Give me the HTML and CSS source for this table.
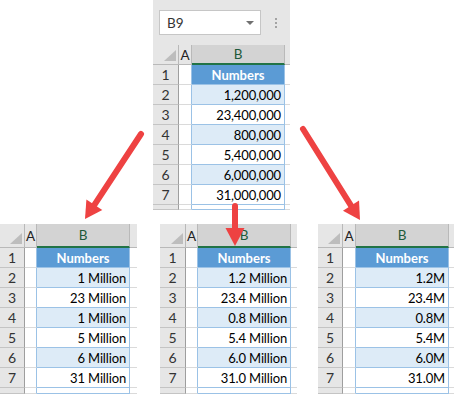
FILE: index.html
```html
<!DOCTYPE html>
<html>
<head>
<meta charset="utf-8">
<link rel="stylesheet" href="styles.css">
</head>
<body>
<div class="page">
  <div class="top-row">
    <div class="sheet sheet-top">
      <div class="formula">
        <div class="namebox"><span>B9</span><span class="caret"></span></div>
        <div class="dots"><i></i><i></i><i></i></div>
      </div>
      <div class="grid grid-top">
        <div class="corner"></div><div class="ch">A</div><div class="ch sel">B</div><div class="ch c"></div>
        <div class="rh">1</div><div class="ca"></div><div class="cb hdr">Numbers</div><div class="cc"></div>
        <div class="rh">2</div><div class="ca"></div><div class="cb alt">1,200,000</div><div class="cc"></div>
        <div class="rh">3</div><div class="ca"></div><div class="cb">23,400,000</div><div class="cc"></div>
        <div class="rh">4</div><div class="ca"></div><div class="cb alt">800,000</div><div class="cc"></div>
        <div class="rh">5</div><div class="ca"></div><div class="cb">5,400,000</div><div class="cc"></div>
        <div class="rh">6</div><div class="ca"></div><div class="cb alt">6,000,000</div><div class="cc"></div>
        <div class="rh">7</div><div class="ca"></div><div class="cb">31,000,000</div><div class="cc"></div>
        <div class="rh"></div><div class="ca"></div><div class="cb"></div><div class="cc"></div>
      </div>
    </div>
  </div>
  <div class="bottom-row">
    <div class="sheet sheet-b1">
      <div class="grid grid-b1">
        <div class="corner"></div><div class="ch">A</div><div class="ch sel">B</div><div class="ch c"></div>
        <div class="rh">1</div><div class="ca"></div><div class="cb hdr">Numbers</div><div class="cc"></div>
        <div class="rh">2</div><div class="ca"></div><div class="cb alt">1 Million</div><div class="cc"></div>
        <div class="rh">3</div><div class="ca"></div><div class="cb">23 Million</div><div class="cc"></div>
        <div class="rh">4</div><div class="ca"></div><div class="cb alt">1 Million</div><div class="cc"></div>
        <div class="rh">5</div><div class="ca"></div><div class="cb">5 Million</div><div class="cc"></div>
        <div class="rh">6</div><div class="ca"></div><div class="cb alt">6 Million</div><div class="cc"></div>
        <div class="rh">7</div><div class="ca"></div><div class="cb">31 Million</div><div class="cc"></div>
        <div class="rh"></div><div class="ca"></div><div class="cb"></div><div class="cc"></div>
      </div>
    </div>
    <div class="sheet sheet-b2">
      <div class="grid grid-b2">
        <div class="corner"></div><div class="ch">A</div><div class="ch sel">B</div><div class="ch c"></div>
        <div class="rh">1</div><div class="ca"></div><div class="cb hdr">Numbers</div><div class="cc"></div>
        <div class="rh">2</div><div class="ca"></div><div class="cb alt">1.2 Million</div><div class="cc"></div>
        <div class="rh">3</div><div class="ca"></div><div class="cb">23.4 Million</div><div class="cc"></div>
        <div class="rh">4</div><div class="ca"></div><div class="cb alt">0.8 Million</div><div class="cc"></div>
        <div class="rh">5</div><div class="ca"></div><div class="cb">5.4 Million</div><div class="cc"></div>
        <div class="rh">6</div><div class="ca"></div><div class="cb alt">6.0 Million</div><div class="cc"></div>
        <div class="rh">7</div><div class="ca"></div><div class="cb">31.0 Million</div><div class="cc"></div>
        <div class="rh"></div><div class="ca"></div><div class="cb"></div><div class="cc"></div>
      </div>
    </div>
    <div class="sheet sheet-b3">
      <div class="grid grid-b3">
        <div class="corner"></div><div class="ch">A</div><div class="ch sel">B</div><div class="ch c"></div>
        <div class="rh">1</div><div class="ca"></div><div class="cb hdr">Numbers</div><div class="cc"></div>
        <div class="rh">2</div><div class="ca"></div><div class="cb alt">1.2M</div><div class="cc"></div>
        <div class="rh">3</div><div class="ca"></div><div class="cb">23.4M</div><div class="cc"></div>
        <div class="rh">4</div><div class="ca"></div><div class="cb alt">0.8M</div><div class="cc"></div>
        <div class="rh">5</div><div class="ca"></div><div class="cb">5.4M</div><div class="cc"></div>
        <div class="rh">6</div><div class="ca"></div><div class="cb alt">6.0M</div><div class="cc"></div>
        <div class="rh">7</div><div class="ca"></div><div class="cb">31.0M</div><div class="cc"></div>
        <div class="rh"></div><div class="ca"></div><div class="cb"></div><div class="cc"></div>
      </div>
    </div>
  </div>
  <svg class="arrows" width="454" height="394" viewBox="0 0 454 394">
    <g fill="#ee4242" stroke="#ee4242">
      <line x1="141" y1="134" x2="94.4" y2="204.8" stroke-width="6" stroke-linecap="round"/>
      <polygon points="85,219 102.3,210 86.4,199.6" stroke="none"/>
      <line x1="235" y1="206" x2="235" y2="229" stroke-width="6" stroke-linecap="round"/>
      <polygon points="235,246 225.5,228 244.5,228" stroke="none"/>
      <line x1="303" y1="129" x2="351" y2="205.6" stroke-width="6" stroke-linecap="round"/>
      <polygon points="360,220 359.05,200.56 342.95,210.64" stroke="none"/>
    </g>
  </svg>
</div>
</body>
</html>
```
FILE: styles.css
```css
body {
  margin: 0;
  font-family: Lato, "Liberation Sans", sans-serif;
}
.page {
  position: relative;
  width: 454px;
  height: 394px;
  overflow: hidden;
  background: #fff;
}
.top-row {
  display: flex;
  padding-left: 153px;
}
.bottom-row {
  display: flex;
  margin-top: 14px;
}
.sheet {
  background: #e6e6e6;
}
.sheet-top { width: 137px; }
.sheet-b1 { width: 137px; }
.sheet-b2 { width: 137px; margin-left: 23px; }
.sheet-b3 { width: 136px; margin-left: 21px; }

.formula {
  height: 45px;
  box-sizing: border-box;
  padding: 10px 0 0 6px;
  display: flex;
  align-items: flex-start;
}
.namebox {
  width: 102px;
  height: 25px;
  box-sizing: border-box;
  border: 1px solid #c6c6c6;
  background: #fff;
  display: flex;
  align-items: center;
  justify-content: space-between;
  padding: 0 6px 0 7px;
  font-size: 13.5px;
  color: #333;
}
.caret {
  width: 0;
  height: 0;
  border-left: 4px solid transparent;
  border-right: 4px solid transparent;
  border-top: 4px solid #707070;
}
.dots {
  margin: 8px 0 0 14px;
  display: flex;
  flex-direction: column;
  gap: 2px;
}
.dots i {
  display: block;
  width: 2px;
  height: 2px;
  background: #a3a3a3;
}

.grid {
  display: grid;
}
.grid > div {
  box-sizing: border-box;
  overflow: hidden;
  white-space: nowrap;
}
.grid-top {
  grid-template-columns: 26px 13px 93px 1fr;
  grid-template-rows: 20px repeat(7, 20px) 5px;
}
.grid-b1 {
  grid-template-columns: 25px 12px 93px 1fr;
  grid-template-rows: 24px repeat(7, 20px) 6px;
}
.grid-b2 {
  grid-template-columns: 26px 12px 93px 1fr;
  grid-template-rows: 24px repeat(7, 20px) 6px;
}
.grid-b3 {
  grid-template-columns: 25px 13px 93px 1fr;
  grid-template-rows: 24px repeat(7, 20px) 6px;
}

.corner {
  position: relative;
  background: #e6e6e6;
  border-right: 1px solid #b9b9b9;
  border-bottom: 1px solid #b9b9b9;
}
.corner::after {
  content: "";
  position: absolute;
  right: 2px;
  bottom: 3px;
  width: 12px;
  height: 11px;
  background: #bdbdbd;
  clip-path: polygon(100% 0, 100% 100%, 0 100%);
}
.ch {
  background: #e6e6e6;
  border-right: 1px solid #b9b9b9;
  border-bottom: 1px solid #b9b9b9;
  display: flex;
  align-items: center;
  justify-content: center;
  font-size: 13.5px;
  color: #222;
}
.ch.sel {
  background: #d3d3d3;
  border-bottom: 2px solid #217346;
  color: #1d5a3a;
}
.ch.c {
  border-right: none;
}
.rh {
  background: #e6e6e6;
  border-right: 1px solid #9e9e9e;
  border-bottom: 1px solid #c4c4c4;
  text-align: center;
  font-size: 14px;
  line-height: 20px;
  color: #333;
}
.ca {
  background: #fff;
  border-right: 1px solid #9bc2e6;
  border-bottom: 1px solid #dadada;
}
.cb {
  background: #fff;
  border-right: 1px solid #9bc2e6;
  border-bottom: 1px solid #9bc2e6;
  text-align: right;
  padding-right: 3px;
  font-size: 13px;
  letter-spacing: -0.15px;
  line-height: 20px;
  color: #000;
}
.cb.alt {
  background: #ddebf7;
}
.cb.hdr {
  background: #5b9bd5;
  color: #fff;
  font-weight: bold;
  text-align: center;
  padding-right: 0;
  letter-spacing: 0;
}
.cc {
  background: #fff;
  border-bottom: 1px solid #dadada;
}

.arrows {
  position: absolute;
  left: 0;
  top: 0;
  pointer-events: none;
}
```
